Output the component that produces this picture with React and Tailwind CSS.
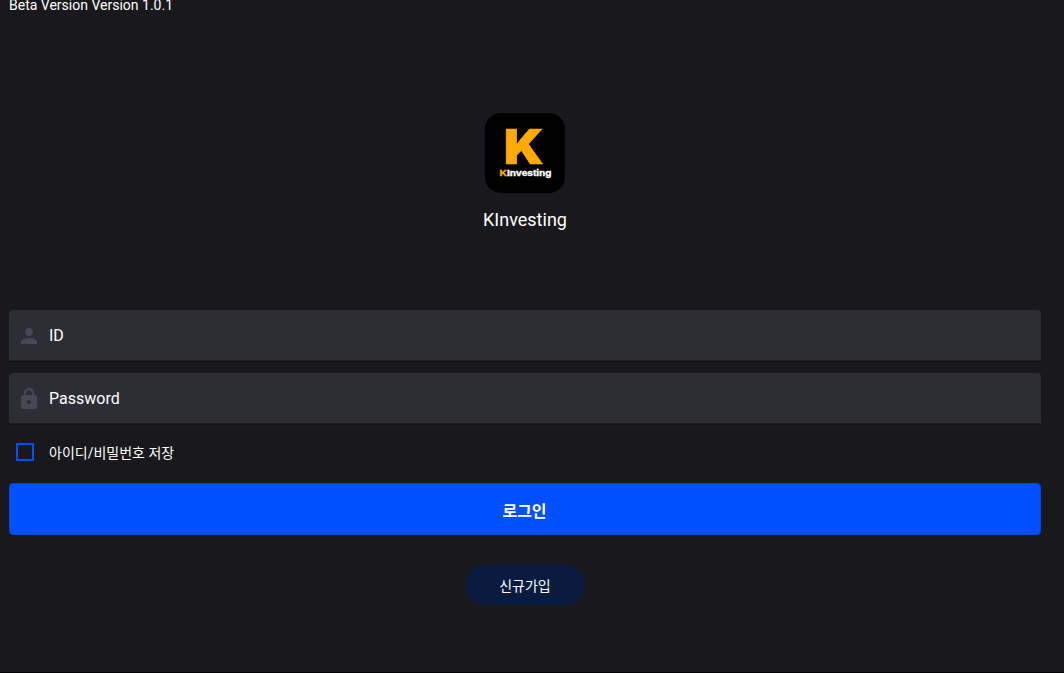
import { useState } from "react";

function PersonIcon() {
  return (
    <svg viewBox="0 0 24 24" className="h-6 w-6 fill-[#484852]" aria-hidden="true">
      <path d="M12 12c2.21 0 4-1.79 4-4s-1.79-4-4-4-4 1.79-4 4 1.79 4 4 4zm0 2c-2.67 0-8 1.34-8 4v2h16v-2c0-2.66-5.33-4-8-4z" />
    </svg>
  );
}

function LockIcon() {
  return (
    <svg viewBox="0 0 24 24" className="h-6 w-6 fill-[#484852]" aria-hidden="true">
      <path d="M18 8h-1V6c0-2.76-2.24-5-5-5S7 3.24 7 6v2H6c-1.1 0-2 .9-2 2v10c0 1.1.9 2 2 2h12c1.1 0 2-.9 2-2V10c0-1.1-.9-2-2-2zm-6 9c-1.1 0-2-.9-2-2s.9-2 2-2 2 .9 2 2-.9 2-2 2zm3.1-9H8.9V6c0-1.71 1.39-3.1 3.1-3.1 1.71 0 3.1 1.39 3.1 3.1v2z" />
    </svg>
  );
}

function Logo() {
  return (
    <svg
      viewBox="0 0 80 80"
      className="h-20 w-20 rounded-[16px] bg-black"
      role="img"
      aria-label="KInvesting"
    >
      <text
        x="18.8"
        y="50.8"
        fontSize="47.5"
        textLength="40"
        lengthAdjust="spacingAndGlyphs"
        fill="#ffaa00"
        stroke="#ffaa00"
        strokeWidth="0.6"
        className="font-['Inter',sans-serif] font-black"
      >
        K
      </text>
      <g
        fontSize="9.5"
        strokeWidth="0.4"
        className="font-['Liberation_Sans',sans-serif] font-bold"
      >
        <text x="14.5" y="63" textLength="7.5" lengthAdjust="spacingAndGlyphs" fill="#ffaa00" stroke="#ffaa00">
          K
        </text>
        <text x="22" y="63" textLength="44.5" lengthAdjust="spacingAndGlyphs" fill="#ffffff" stroke="#ffffff">
          Investing
        </text>
      </g>
    </svg>
  );
}

function Field({ icon, label, type, value, onChange }) {
  return (
    <label className="flex h-[51px] items-center rounded-t border-b border-[#1d1d21] bg-[#2d2d35] pt-px pl-2 shadow-[0_1px_0_#111114]">
      {icon}
      <input
        type={type}
        value={value}
        placeholder={label}
        onChange={(event) => onChange(event.target.value)}
        className="ml-2 h-full min-w-0 flex-1 bg-transparent text-base text-white outline-none placeholder:text-white"
      />
    </label>
  );
}

export default function App() {
  const [id, setId] = useState("");
  const [password, setPassword] = useState("");
  const [remember, setRemember] = useState(false);

  return (
    <div className="flex h-[673px] flex-col overflow-hidden border-b border-black bg-[#19181c] pr-[23px] pl-[9px] font-['Roboto','Noto_Sans_CJK_KR',sans-serif] text-white">
      <p className="-mt-[5px] h-5 text-sm leading-5">Beta Version Version 1.0.1</p>

      <header className="mt-[98px] flex flex-col items-center">
        <Logo />
        <h1 className="mt-[13px] text-lg leading-7">KInvesting</h1>
      </header>

      <form className="mt-[76px] flex flex-col" onSubmit={(event) => event.preventDefault()}>
        <div className="flex flex-col gap-3">
          <Field icon={<PersonIcon />} label="ID" type="text" value={id} onChange={setId} />
          <Field
            icon={<LockIcon />}
            label="Password"
            type="password"
            value={password}
            onChange={setPassword}
          />
        </div>

        <label className="mt-3.5 flex h-7 items-center pl-[7px] text-sm">
          <input
            type="checkbox"
            checked={remember}
            onChange={(event) => setRemember(event.target.checked)}
            className="h-[18px] w-[18px] appearance-none border-2 border-[#0050ff] checked:bg-[#0050ff]"
          />
          <span className="ml-[15px] pt-0.5">아이디/비밀번호 저장</span>
        </label>

        <button
          type="submit"
          className="mt-[17px] h-[52px] rounded border border-[#0748d8] bg-[#0050ff] pt-[5px] pr-px text-base font-bold"
        >
          로그인
        </button>

        <button
          type="button"
          className="mt-[30px] h-10 w-[120px] self-center rounded-full bg-[#0a1b40] pt-0.5 text-sm"
        >
          신규가입
        </button>
      </form>
    </div>
  );
}
